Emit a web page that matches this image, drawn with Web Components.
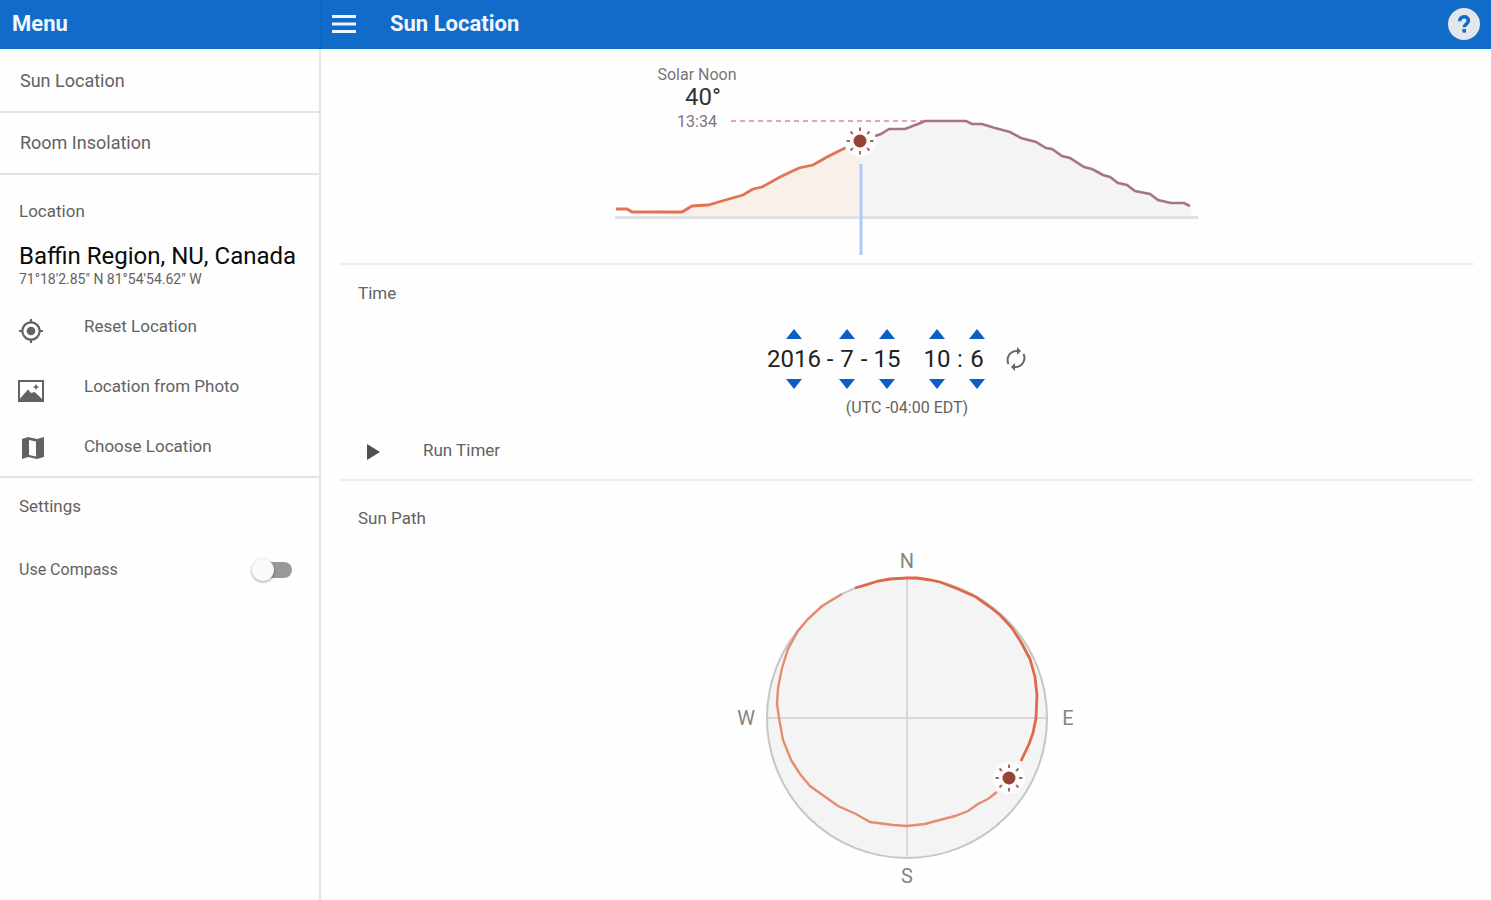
<!DOCTYPE html>
<html lang="en">
<head>
<meta charset="utf-8"/>
<meta name="viewport" content="width=device-width, initial-scale=1"/>
<title>Sun Location</title>
<style>
html, body {
	margin: 0;
	min-height: 100%;
}

body {
	font-family: Roboto, "Liberation Sans", sans-serif;
	font-size: 17px;
	line-height: 24px;
	color: #626262;
	background: #fefefe;
	--primary: #116bc9;
	--line: #e4e4e4;
	--strong: #0a0a0a;
}
</style>
</head>
<body>

<template id="sun-app">
<style>
:host {
	display: grid;
	grid-template-columns: 321px minmax(0, 1fr);
	min-height: 100vh;
}
nav {
	box-sizing: border-box;
	border-right: 2px solid var(--line);
}
main {
	min-width: 0;
}
.content {
	padding: 0 17px 0 19px;
}
</style>
<nav aria-label="Menu">
	<app-bar><span>Menu</span></app-bar>
	<slot name="menu"></slot>
</nav>
<main>
	<app-bar wide><span>Sun Location</span></app-bar>
	<div class="content"><slot></slot></div>
</main>
</template>

<template id="app-bar">
<style>
:host {
	box-sizing: border-box;
	display: flex;
	align-items: center;
	height: 49px;
	padding: 0 12px 2px;
	/* runs over the drawer's own border */
	margin-right: -2px;
	background: var(--primary);
	color: #f0f6fd;
	font-size: 22px;
	font-weight: 700;
}
:host([wide]) {
	margin-right: 0;
	padding: 0 11px 2px;
	box-shadow: inset 1px 0 #0d60b8;
}
button {
	display: none;
	padding: 0;
	border: 0;
	background: none;
	color: inherit;
}
:host([wide]) button {
	display: block;
}
:host([wide]) .title {
	flex: 1;
	margin-left: 34px;
}
svg {
	display: block;
}
</style>
<button aria-label="Toggle menu">
	<svg width="24" height="24" stroke="currentColor" stroke-width="3"><path d="M0 4.500H24M0 12H24M0 19.500H24"/></svg>
</button>
<div class="title"><slot></slot></div>
<button aria-label="Help">
	<svg width="32" height="32" viewBox="0 0 32 32"><circle cx="16" cy="16" r="16" fill="#e3e6ea"/><path d="M11.7 13.2C11.7 10.5 13.5 8.8 16 8.8c2.6 0 4.4 1.5 4.4 3.9 0 3.3-4.2 3.4-4.2 6.6" fill="none" stroke="#116bc9" stroke-width="3.500"/><rect x="14.4" y="21" width="3.6" height="3.6" fill="#116bc9"/></svg>
</button>
</template>

<template id="menu-link">
<style>
:host {
	display: block;
	border-bottom: 2px solid var(--line);
}
:host([first]) {
	padding-top: 2px;
}
a {
	display: block;
	padding: 18px 20px;
	font-size: 18px;
	color: inherit;
	text-decoration: none;
}
</style>
<a href="#"><slot></slot></a>
</template>

<template id="place-info">
<style>
:host {
	display: block;
	padding: 24px 19px 6px;
}
h2 {
	margin: 0;
	font-size: 17px;
	line-height: 24px;
	font-weight: 400;
}
.name {
	margin-top: 21px;
	font-size: 24px;
	line-height: 24px;
	color: var(--strong);
	white-space: nowrap;
}
.coords {
	font-size: 14px;
	line-height: 22px;
}
</style>
<h2>Location</h2>
<div class="name"><slot name="name"></slot></div>
<div class="coords"><slot name="coords"></slot></div>
</template>

<template id="action-item">
<style>
:host {
	display: block;
}
button {
	display: flex;
	align-items: center;
	gap: 40px;
	width: 100%;
	height: 60px;
	padding: 0 18px;
	border: 0;
	background: none;
	font: inherit;
	color: inherit;
	text-align: left;
}
.icon {
	display: block;
	width: 26px;
	height: 26px;
	padding-top: 10px;
	fill: #626262;
}
:host([compact]) .icon {
	padding-top: 4px;
}
svg {
	display: block;
}
</style>
<button><span class="icon"></span><slot></slot></button>
</template>

<template id="setting-switch">
<style>
:host {
	display: block;
	border-top: 2px solid var(--line);
	padding: 16px 29px 0 19px;
}
h2 {
	margin: 0 0 40px;
	font-size: 17px;
	line-height: 24px;
	font-weight: 400;
}
label {
	display: flex;
	align-items: center;
	justify-content: space-between;
	font-size: 16px;
}
input {
	appearance: none;
	display: flex;
	align-items: center;
	width: 36px;
	height: 16px;
	margin: 0 -2px 0 0;
	border-radius: 8px;
	background: #999;
}
input::before {
	content: "";
	flex: none;
	width: 22px;
	height: 22px;
	margin-left: -4px;
	border-radius: 50%;
	background: #fafafa;
	box-shadow: 0 1px 3px rgba(0, 0, 0, .4);
}
input:checked {
	background: #88b5e4;
}
input:checked::before {
	margin-left: 18px;
	background: var(--primary);
}
</style>
<h2>Settings</h2>
<label><slot></slot><input type="checkbox" aria-label="Use Compass"/></label>
</template>

<template id="sun-section">
<style>
:host {
	display: block;
	border-bottom: 2px solid #ededed;
}
:host([last]) {
	border-bottom: 0;
}
h2 {
	margin: 0;
	padding: 16px 18px 0;
	font-size: 17px;
	line-height: 24px;
	font-weight: 400;
}
:host([last]) h2 {
	padding-top: 25px;
}
:host(:not([heading])) h2 {
	display: none;
}
</style>
<h2></h2>
<slot></slot>
</template>

<template id="elevation-chart">
<style>
:host {
	display: flex;
	justify-content: center;
}
svg {
	display: block;
	max-width: 100%;
}
text {
	text-anchor: middle;
	font-size: 16px;
	fill: #777;
}
.angle {
	font-size: 24px;
	fill: #333;
}
</style>
<svg width="584" height="214" viewBox="0 0 584 214">
	<path id="day-area" fill="#f4f4f4"/>
	<path id="past-area" fill="#f9f1e9"/>
	<path d="M0 168.500H583" stroke="#e0e0e0" stroke-width="3"/>
	<path d="M116 72H309" stroke="#eda3a3" stroke-width="2" stroke-dasharray="5 4"/>
	<path id="past" fill="none" stroke="#df7352" stroke-width="2.800"/>
	<path id="ahead" fill="none" stroke="#a67584" stroke-width="2.600"/>
	<path d="M246 115V206" stroke="#adc8fb" stroke-width="3"/>
	<g id="sun"></g>
	<text x="82" y="31">Solar Noon</text>
	<text class="angle" x="88" y="56">40°</text>
	<text x="82" y="78">13:34</text>
</svg>
</template>

<template id="time-picker">
<style>
:host {
	display: block;
	padding: 24px 0 0;
	text-align: center;
}
.fields {
	display: flex;
	justify-content: center;
	align-items: center;
	font-size: 24px;
	color: #222;
}
.field {
	display: flex;
	flex-direction: column;
	align-items: center;
	gap: 8px;
}
input {
	box-sizing: border-box;
	width: 28px;
	height: 24px;
	padding: 0;
	border: 0;
	background: none;
	font: inherit;
	line-height: 24px;
	color: inherit;
	text-align: center;
}
.long input {
	width: 54px;
}
.short input {
	width: 16px;
}
button {
	display: block;
	padding: 0;
	border: 0;
	background: none;
}
button svg {
	display: block;
}
.sep {
	width: 18px;
}
.gap {
	width: 22px;
}
.now {
	display: flex;
	justify-content: center;
	width: 62px;
}
.zone {
	margin-top: 7px;
	font-size: 16px;
}
</style>
<div class="fields"></div>
<div class="zone"><slot></slot></div>
</template>

<template id="run-timer">
<style>
:host {
	display: block;
}
button {
	display: flex;
	align-items: center;
	gap: 43px;
	height: 59px;
	padding: 0 26px;
	border: 0;
	background: none;
	font: inherit;
	color: inherit;
}
svg {
	display: block;
	padding-top: 4px;
}
</style>
<button><svg width="14" height="16" viewBox="0 0 14 16"><path d="M1 0L14 8L1 16Z" fill="#505050"/></svg><slot></slot></button>
</template>

<template id="sun-compass">
<style>
:host {
	display: flex;
	justify-content: center;
	padding: 18px 0 12px;
}
svg {
	display: block;
	max-width: 100%;
}
text {
	text-anchor: middle;
	font-size: 20px;
	fill: #858585;
}
</style>
<svg width="350" height="340" viewBox="0 0 350 340">
	<circle cx="175" cy="170" r="140" fill="#f4f4f4" stroke="#c6c6c6" stroke-width="2"/>
	<path d="M175 30V310M35 170H315" stroke="#d8d8d8" stroke-width="2"/>
	<path id="rest" fill="none" stroke="#e68c70" stroke-width="2.400"/>
	<path id="done" fill="none" stroke="#dc6a4a" stroke-width="2.800"/>
	<g id="sun"></g>
	<text x="175" y="20">N</text>
	<text x="336" y="177">E</text>
	<text x="175" y="335">S</text>
	<text x="14" y="177">W</text>
</svg>
</template>

<sun-app>
	<menu-link slot="menu" first>Sun Location</menu-link>
	<menu-link slot="menu">Room Insolation</menu-link>
	<place-info slot="menu">
		<span slot="name">Baffin Region, NU, Canada</span>
		<span slot="coords">71°18'2.85" N 81°54'54.62" W</span>
	</place-info>
	<action-item slot="menu" icon="target">Reset Location</action-item>
	<action-item slot="menu" icon="photo">Location from Photo</action-item>
	<action-item slot="menu" icon="map" compact>Choose Location</action-item>
	<setting-switch slot="menu">Use Compass</setting-switch>

	<sun-section>
		<elevation-chart></elevation-chart>
	</sun-section>
	<sun-section heading="Time">
		<time-picker>(UTC -04:00 EDT)</time-picker>
		<run-timer>Run Timer</run-timer>
	</sun-section>
	<sun-section heading="Sun Path" last>
		<sun-compass></sun-compass>
	</sun-section>
</sun-app>

<script>

'use strict';

const ICONS = {
	target: '<svg width="26" height="26" viewBox="0 0 24 24"><path d="M12 8a4 4 0 1 0 0 8 4 4 0 0 0 0-8zm8.940 3A9 9 0 0 0 13 3.060V1h-2v2.060A9 9 0 0 0 3.060 11H1v2h2.060A9 9 0 0 0 11 20.940V23h2v-2.060A9 9 0 0 0 20.940 13H23v-2zM12 19a7 7 0 1 1 0-14 7 7 0 0 1 0 14z"/></svg>',
	photo: '<svg width="26" height="26" viewBox="0 0 26 26"><path fill-rule="evenodd" d="M0 2H26V24H0ZM2 4V20.500L6.500 15.500L10 11.500L13 15L16.500 14L21 18L24 21V4Z"/><path d="M18 6l1 2 2 1-2 1-1 2-1-2-2-1 2-1z"/></svg>',
	map: '<svg width="26" height="26" viewBox="0 0 26 26"><path fill-rule="evenodd" d="M4 4L10 2L19 4L26 2V22L19 24L10 22L4 24ZM11 5V20L18 21.500V6.500Z"/></svg>'
};

// x,y pairs on the 584x214 chart
const PAST = '1,160 12,160 17,163 67,163 77,157 93,156 107,152 128,146 138,140 147,138 165,128 184,119 198,116 212,108 232,98 245,91';
const AHEAD = '245,91 257,88 266,85 274,80 290,80 303,75 310,72 351,72 357,75 367,75 380,79 395,83 406,89 421,93 431,99 437,100 447,107 455,109 469,118 477,120 488,126 495,128 503,134 512,136 520,142 535,145 543,151 556,154 569,154 575,157';

// x,y pairs on the 350x340 compass
const DONE = '123,40 134,37 146,33 158,31 175,30 185,30 198,32 208,34 226,41 244,49 258,59 268,67 280,80 289,94 298,111 303,129 305,147 304,170 301,185 297,196 289,213';
const REST = '265,244 256,251 246,256 236,263 223,268 204,273 193,276 175,278 161,277 138,274 124,266 106,258 92,248 78,238 68,226 59,212 51,192 47,170 45,156 46,140 50,120 56,101 66,83 76,71 90,58 110,46';

function line(points) {
	return 'M' + points.split(' ').join('L');
}

function sun(x, y) {
	let rays = '';
	for(let i = 0; i < 8; i += 1) {
		rays += `<path d="M0 -10V-13.500" transform="rotate(${i * 45})" stroke="#a36b60" stroke-width="2"/>`;
	}
	return `<g transform="translate(${x} ${y})"><circle r="16" fill="#fefefe"/><circle r="6.500" fill="#964236"/>${rays}</g>`;
}

class BaseElement extends HTMLElement {
	constructor() {
		super();

		const shadow = this.attachShadow({mode: 'open'});
		const template = document.getElementById(this.localName);
		shadow.appendChild(template.content.cloneNode(true));
	}

	$(selector) {
		return this.shadowRoot.querySelector(selector);
	}
}

class ActionItem extends BaseElement {
	connectedCallback() {
		this.$('.icon').innerHTML = ICONS[this.getAttribute('icon')];
	}
}

class SunSection extends BaseElement {
	connectedCallback() {
		this.$('h2').textContent = this.getAttribute('heading') || '';
	}
}

class ElevationChart extends BaseElement {
	connectedCallback() {
		this.$('#past').setAttribute('d', line(PAST));
		this.$('#ahead').setAttribute('d', line(AHEAD));
		this.$('#past-area').setAttribute('d', line(PAST) + 'V168H77Z');
		this.$('#day-area').setAttribute('d', line(AHEAD) + 'L578,168H245Z');
		this.$('#sun').innerHTML = sun(245, 92);
	}
}

class SunCompass extends BaseElement {
	connectedCallback() {
		this.$('#done').setAttribute('d', line(DONE));
		this.$('#rest').setAttribute('d', line(REST));
		this.$('#sun').innerHTML = sun(277, 230);
	}
}

class TimePicker extends BaseElement {
	connectedCallback() {
		const field = (name, value, size) => `
			<div class="field ${size}">
				<button aria-label="Increase ${name}"><svg width="16" height="10"><path d="M0 10L8 0L16 10Z" fill="#0b5fc4"/></svg></button>
				<input aria-label="${name}" value="${value}"/>
				<button aria-label="Decrease ${name}"><svg width="16" height="10"><path d="M0 0L8 10L16 0Z" fill="#0b5fc4"/></svg></button>
			</div>`;

		this.$('.fields').innerHTML =
			field('year', 2016, 'long') + '<span class="sep">-</span>' +
			field('month', 7, 'short') + '<span class="sep">-</span>' +
			field('day', 15, '') + '<span class="gap"></span>' +
			field('hour', 10, '') + '<span class="sep">:</span>' +
			field('minute', 6, 'short') +
			`<button class="now" aria-label="Set to now"><svg width="24" height="24" viewBox="0 0 24 24">
				<g fill="none" stroke="#666" stroke-width="2"><path d="M4.500 17A9 9 0 0 1 12 4H15"/><path d="M19.500 7A9 9 0 0 1 12 20H9"/></g>
				<path d="M13 0L17 4L13 8ZM11 16L7 20L11 24Z" fill="#666"/>
			</svg></button>`;
	}
}

window.customElements.define('app-bar', class extends BaseElement {});
window.customElements.define('menu-link', class extends BaseElement {});
window.customElements.define('place-info', class extends BaseElement {});
window.customElements.define('action-item', ActionItem);
window.customElements.define('setting-switch', class extends BaseElement {});
window.customElements.define('elevation-chart', ElevationChart);
window.customElements.define('time-picker', TimePicker);
window.customElements.define('run-timer', class extends BaseElement {});
window.customElements.define('sun-compass', SunCompass);
window.customElements.define('sun-section', SunSection);
window.customElements.define('sun-app', class extends BaseElement {});
</script>
</body>
</html>
